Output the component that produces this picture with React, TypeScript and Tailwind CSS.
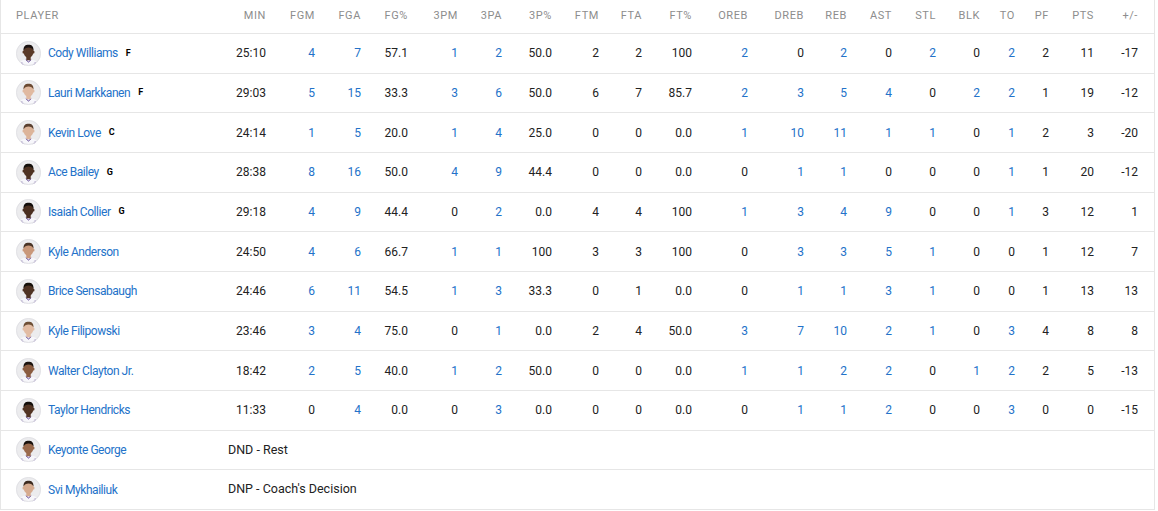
import React from "react";

type Row = {
  name: string;
  pos?: string;
  skin: string;
  hair: string;
  stats?: (string | number)[];
  note?: string;
};

const HEADERS = [
  "MIN", "FGM", "FGA", "FG%", "3PM", "3PA", "3P%", "FTM", "FTA", "FT%",
  "OREB", "DREB", "REB", "AST", "STL", "BLK", "TO", "PF", "PTS", "+/-",
];

// indexes (into stats, 0 = MIN) that are links when non-zero
const LINK_COLS = new Set([1, 2, 4, 5, 10, 11, 12, 13, 14, 15, 16]);

const ROWS: Row[] = [
  { name: "Cody Williams", pos: "F", skin: "#5a3a28", hair: "#1a1210", stats: ["25:10", 4, 7, "57.1", 1, 2, "50.0", 2, 2, "100", 2, 0, 2, 0, 2, 0, 2, 2, 11, -17] },
  { name: "Lauri Markkanen", pos: "F", skin: "#e0b9a0", hair: "#6b4a32", stats: ["29:03", 5, 15, "33.3", 3, 6, "50.0", 6, 7, "85.7", 2, 3, 5, 4, 0, 2, 2, 1, 19, -12] },
  { name: "Kevin Love", pos: "C", skin: "#dcb49a", hair: "#5a4030", stats: ["24:14", 1, 5, "20.0", 1, 4, "25.0", 0, 0, "0.0", 1, 10, 11, 1, 1, 0, 1, 2, 3, -20] },
  { name: "Ace Bailey", pos: "G", skin: "#4e3222", hair: "#15100c", stats: ["28:38", 8, 16, "50.0", 4, 9, "44.4", 0, 0, "0.0", 0, 1, 1, 0, 0, 0, 1, 1, 20, -12] },
  { name: "Isaiah Collier", pos: "G", skin: "#4a2f20", hair: "#120d0a", stats: ["29:18", 4, 9, "44.4", 0, 2, "0.0", 4, 4, "100", 1, 3, 4, 9, 0, 0, 1, 3, 12, 1] },
  { name: "Kyle Anderson", skin: "#c9987a", hair: "#4a3426", stats: ["24:50", 4, 6, "66.7", 1, 1, "100", 3, 3, "100", 0, 3, 3, 5, 1, 0, 0, 1, 12, 7] },
  { name: "Brice Sensabaugh", skin: "#4f3323", hair: "#161009", stats: ["24:46", 6, 11, "54.5", 1, 3, "33.3", 0, 1, "0.0", 0, 1, 1, 3, 1, 0, 0, 1, 13, 13] },
  { name: "Kyle Filipowski", skin: "#e2bca4", hair: "#6e4f36", stats: ["23:46", 3, 4, "75.0", 0, 1, "0.0", 2, 4, "50.0", 3, 7, 10, 2, 1, 0, 3, 4, 8, 8] },
  { name: "Walter Clayton Jr.", skin: "#8a5c40", hair: "#1c140f", stats: ["18:42", 2, 5, "40.0", 1, 2, "50.0", 0, 0, "0.0", 1, 1, 2, 2, 0, 1, 2, 2, 5, -13] },
  { name: "Taylor Hendricks", skin: "#523423", hair: "#130e0a", stats: ["11:33", 0, 4, "0.0", 0, 3, "0.0", 0, 0, "0.0", 0, 1, 1, 2, 0, 0, 3, 0, 0, -15] },
  { name: "Keyonte George", skin: "#9a6a4c", hair: "#1a120d", note: "DND - Rest" },
  { name: "Svi Mykhailiuk", skin: "#d6ab8f", hair: "#3d2b1f", note: "DNP - Coach's Decision" },
];

const GRID =
  "grid grid-cols-[219px_46px_49px_46px_47px_50px_44px_50px_47px_43px_50px_56px_56px_43px_45px_44px_44px_35px_34px_45px_44px_16px]";

function Avatar({ skin, hair, id }: { skin: string; hair: string; id: string }) {
  return (
    <svg width="25" height="25" viewBox="0 0 25 25" className="shrink-0">
      <defs>
        <clipPath id={id}>
          <circle cx="12.5" cy="12.5" r="12.5" />
        </clipPath>
      </defs>
      <g clipPath={`url(#${id})`}>
        <rect width="25" height="25" fill="#ececee" />
        {/* jersey */}
        <path d="M2 25 C2.5 20.5 6.5 19 9.8 18.6 L12.5 20.6 L15.2 18.6 C18.5 19 22.5 20.5 23 25 Z" fill="#f7f7fb" />
        <path d="M5.5 21.5 L8 25 M19.5 21.5 L17 25" stroke="#6a4fa0" strokeWidth="1.2" />
        <path d="M9.8 18.6 L12.5 21 L15.2 18.6" stroke="#5b3f92" strokeWidth="1" fill="none" />
        {/* neck */}
        <rect x="10.3" y="15" width="4.4" height="4.2" fill={skin} />
        {/* ears */}
        <ellipse cx="7.4" cy="11" rx="0.9" ry="1.5" fill={skin} />
        <ellipse cx="17.6" cy="11" rx="0.9" ry="1.5" fill={skin} />
        {/* head */}
        <ellipse cx="12.5" cy="10.6" rx="5" ry="6.1" fill={skin} />
        {/* hair */}
        <path d="M7.5 9.6 C7.3 5 9.6 3.8 12.5 3.8 C15.4 3.8 17.7 5 17.5 9.6 C16.6 7.2 14.8 6.4 12.5 6.4 C10.2 6.4 8.4 7.2 7.5 9.6 Z" fill={hair} />
      </g>
      <circle cx="12.5" cy="12.5" r="12" fill="none" stroke="#e2e2e6" strokeWidth="1" />
    </svg>
  );
}

export default function App() {
  return (
    <div
      className="w-[1155px] bg-white text-[12px] text-[#222222] border-x border-[#e6e6e6]"
      style={{ fontFamily: "Roboto, 'Liberation Sans', Arial, sans-serif" }}
    >
      {/* header */}
      <div className={`${GRID} h-[34px] border-b border-[#e6e6e6] pt-[9px] text-[11px] leading-[13px] tracking-[0.6px] text-[#8d8d8d]`}>
        <div className="pl-[15px]">PLAYER</div>
        {HEADERS.map((h) => (
          <div key={h} className="text-right">
            {h}
          </div>
        ))}
        <div />
      </div>

      {ROWS.map((r, ri) => (
        <div key={r.name} className={`${GRID} h-[39.67px] items-center border-b border-[#e6e6e6]`}>
          <div className="flex items-center pl-[15px]">
            <Avatar skin={r.skin} hair={r.hair} id={`av${ri}`} />
            <span className="ml-[7px] tracking-[-0.45px] text-[#2372c9]">{r.name}</span>
            {r.pos && <span className="ml-[8px] text-[9px] font-bold text-black">{r.pos}</span>}
          </div>
          {r.stats ? (
            <>
              {r.stats.map((v, i) => {
                const link = LINK_COLS.has(i) && Number(v) !== 0;
                return (
                  <div key={i} className={`text-right ${link ? "text-[#2372c9]" : "text-[#222222]"}`}>
                    {v}
                  </div>
                );
              })}
              <div />
            </>
          ) : (
            <div className="col-span-21 pl-[8px] text-[12.5px]">{r.note}</div>
          )}
        </div>
      ))}
    </div>
  );
}
